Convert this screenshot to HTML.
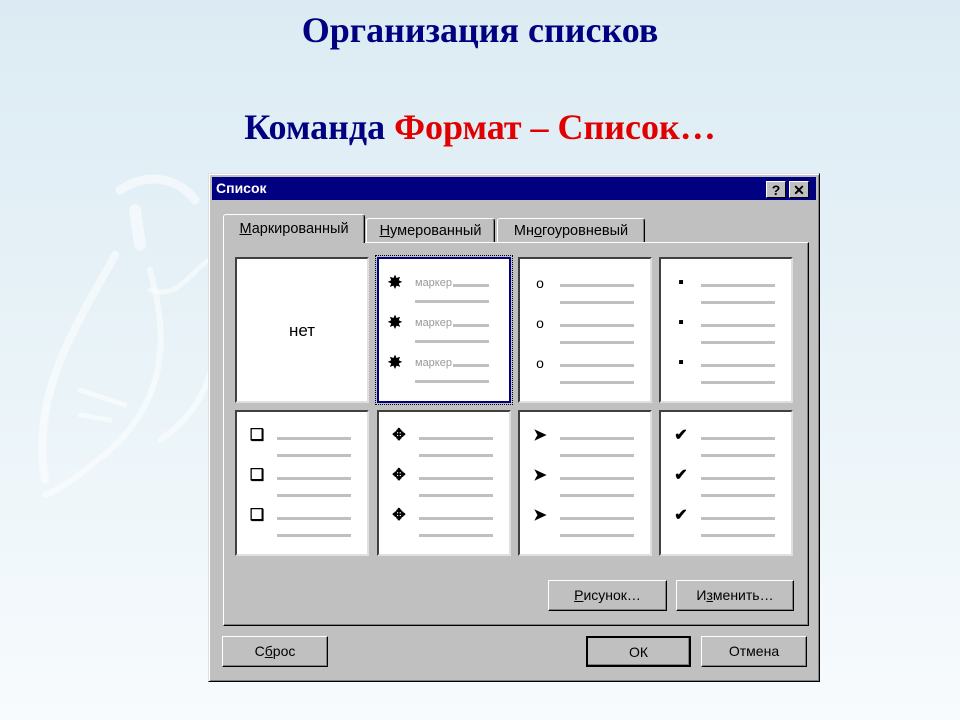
<!DOCTYPE html>
<html><head><meta charset="utf-8"><style>
*{margin:0;padding:0;box-sizing:border-box}
body{width:960px;height:720px;overflow:hidden;position:relative;background:linear-gradient(#dcebf3 0%,#e9f3f8 50%,#f7fbfd 100%);font-family:"Liberation Sans",sans-serif}
.h{position:absolute;left:0;width:960px;text-align:center;font-family:"Liberation Serif",serif;font-weight:bold;font-size:36px;color:#000080}
.dlg{position:absolute;left:208px;top:173px;width:612px;height:509px;background:#c0c0c0;border:1px solid;border-color:#dfdfdf #000 #000 #dfdfdf;box-shadow:inset 1px 1px #fff,inset -1px -1px #808080}
.tb{position:absolute;left:3px;top:3px;width:604px;height:23px;background:#000080;color:#fff;font-weight:bold;font-size:14px;line-height:23px;padding-left:4px}
.tbb{position:absolute;top:4px;width:20px;height:17px;background:#c0c0c0;color:#000;font-weight:bold;font-size:14px;line-height:16px;text-align:center;border:1px solid;border-color:#fff #000 #000 #fff}
.abs{position:absolute}
.tab{position:absolute;background:#c0c0c0;border:1px solid;border-bottom:none;border-color:#fff #000 #000 #fff;border-radius:3px 3px 0 0;font-size:14.5px;text-align:center;box-shadow:inset -1px 0 #808080}
.panel{position:absolute;left:14px;top:68px;width:586px;height:384px;border:1px solid;border-color:#fff #000 #000 #fff;box-shadow:inset -1px -1px #808080}
.cell{position:absolute;width:134px;height:146px;background:#fff;border:2px solid;border-color:#404040 #dfdfdf #dfdfdf #404040}
.it{position:absolute;left:0;width:130px;height:40px}
.l1,.l2{position:absolute;left:40px;width:74px;height:3px;background:#c0c0c0}
.l1{top:7px}.l2{top:24px}
.b{position:absolute;left:8px;top:-3px;width:24px;text-align:center;font-size:16px;line-height:18px;color:#000;font-weight:bold}
.m{left:4px;font-size:17px}
.btn{position:absolute;background:#c0c0c0;border:1px solid;border-color:#fff #000 #000 #fff;box-shadow:inset -1px -1px #808080;font-size:14px;text-align:center}
u{text-decoration:underline}
</style></head><body>
<svg class="abs" style="left:0;top:150px" width="220" height="400"><g fill="none" stroke="#fff" stroke-opacity=".5" stroke-linecap="round">
<path d="M115 105 C80 170 30 240 45 330" stroke-width="8"/>
<path d="M150 120 C170 190 165 250 110 300 C80 325 60 340 45 345" stroke-width="6"/>
<path d="M120 40 C150 20 180 30 195 50" stroke-width="9"/>
<path d="M135 60 L140 95" stroke-width="12"/>
<path d="M80 240 L125 255" stroke-width="5"/>
<path d="M80 265 L110 270" stroke-width="5"/>
<path d="M150 140 C180 150 190 120 210 110" stroke-width="5"/>
<path d="M160 290 C190 270 210 240 215 200" stroke-width="6"/>
</g></svg>
<div class="h" style="top:9px">Организация списков</div>
<div class="h" style="top:106px"><span>Команда </span><span style="color:#e00000">Формат – Список…</span></div>
<div class="dlg">
<div class="tb">Список<div class="tbb" style="left:554px">?</div><div class="tbb" style="left:577px">✕</div></div>
<div class="tab" style="left:14px;top:40px;width:142px;height:29px;line-height:28px;z-index:2"><u>М</u>аркированный</div>
<div class="tab" style="left:157px;top:44px;width:129px;height:24px;line-height:24px"><u>Н</u>умерованный</div>
<div class="tab" style="left:288px;top:44px;width:148px;height:24px;line-height:24px">Мн<u>о</u>гоуровневый</div>
<div class="panel"></div>
<div class="cell" style="left:26px;top:83px"><div style="position:absolute;top:62px;width:130px;text-align:center;font-size:17px">нет</div></div>
<div class="cell" style="left:168px;top:83px;border:2px solid #000080;outline:1px dotted #000;outline-offset:1px">
<div class="it" style="top:18px"><div class="b m">✸</div><div class="abs" style="left:36px;top:0;font-size:11px;color:#999">маркер</div><div class="l1" style="left:74px;width:36px"></div><div class="l2" style="left:36px;top:23px"></div></div>
<div class="it" style="top:58px"><div class="b m">✸</div><div class="abs" style="left:36px;top:0;font-size:11px;color:#999">маркер</div><div class="l1" style="left:74px;width:36px"></div><div class="l2" style="left:36px;top:23px"></div></div>
<div class="it" style="top:98px"><div class="b m">✸</div><div class="abs" style="left:36px;top:0;font-size:11px;color:#999">маркер</div><div class="l1" style="left:74px;width:36px"></div><div class="l2" style="left:36px;top:23px"></div></div>
</div>
<div class="cell" style="left:309px;top:83px">
<div class="it" style="top:18px"><div class="b" style="font-weight:normal;font-size:14px">o</div><div class="l1"></div><div class="l2"></div></div>
<div class="it" style="top:58px"><div class="b" style="font-weight:normal;font-size:14px">o</div><div class="l1"></div><div class="l2"></div></div>
<div class="it" style="top:98px"><div class="b" style="font-weight:normal;font-size:14px">o</div><div class="l1"></div><div class="l2"></div></div></div>
<div class="cell" style="left:450px;top:83px">
<div class="it" style="top:18px"><div class="b">▪</div><div class="l1"></div><div class="l2"></div></div>
<div class="it" style="top:58px"><div class="b">▪</div><div class="l1"></div><div class="l2"></div></div>
<div class="it" style="top:98px"><div class="b">▪</div><div class="l1"></div><div class="l2"></div></div></div>
<div class="cell" style="left:26px;top:236px">
<div class="it" style="top:18px"><div class="b">❑</div><div class="l1"></div><div class="l2"></div></div>
<div class="it" style="top:58px"><div class="b">❑</div><div class="l1"></div><div class="l2"></div></div>
<div class="it" style="top:98px"><div class="b">❑</div><div class="l1"></div><div class="l2"></div></div></div>
<div class="cell" style="left:168px;top:236px">
<div class="it" style="top:18px"><div class="b">✥</div><div class="l1"></div><div class="l2"></div></div>
<div class="it" style="top:58px"><div class="b">✥</div><div class="l1"></div><div class="l2"></div></div>
<div class="it" style="top:98px"><div class="b">✥</div><div class="l1"></div><div class="l2"></div></div></div>
<div class="cell" style="left:309px;top:236px">
<div class="it" style="top:18px"><div class="b">➤</div><div class="l1"></div><div class="l2"></div></div>
<div class="it" style="top:58px"><div class="b">➤</div><div class="l1"></div><div class="l2"></div></div>
<div class="it" style="top:98px"><div class="b">➤</div><div class="l1"></div><div class="l2"></div></div></div>
<div class="cell" style="left:450px;top:236px">
<div class="it" style="top:18px"><div class="b">✔</div><div class="l1"></div><div class="l2"></div></div>
<div class="it" style="top:58px"><div class="b">✔</div><div class="l1"></div><div class="l2"></div></div>
<div class="it" style="top:98px"><div class="b">✔</div><div class="l1"></div><div class="l2"></div></div></div>
<div class="btn" style="left:339px;top:406px;width:119px;height:31px;line-height:29px"><u>Р</u>исунок…</div>
<div class="btn" style="left:467px;top:406px;width:118px;height:31px;line-height:29px">И<u>з</u>менить…</div>
<div class="btn" style="left:13px;top:462px;width:106px;height:31px;line-height:29px">С<u>б</u>рос</div>
<div class="btn" style="left:377px;top:462px;width:105px;height:31px;line-height:29px;border:2px solid #000">ОК</div>
<div class="btn" style="left:492px;top:462px;width:106px;height:31px;line-height:29px">Отмена</div>
</div>
</body></html>
